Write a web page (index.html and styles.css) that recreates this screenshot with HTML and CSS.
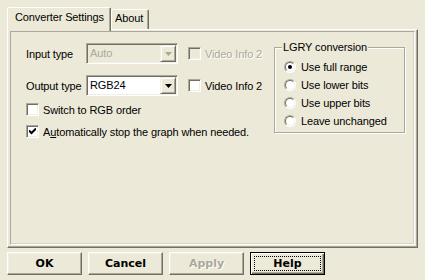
FILE: index.html
```html
<!DOCTYPE html>
<html>
<head>
<meta charset="utf-8">
<link rel="stylesheet" href="styles.css">
</head>
<body>
<div class="dialog">
  <div class="tabs">
    <div class="tab active">Converter Settings</div>
    <div class="tab">About</div>
  </div>
  <div class="panel">
    <div class="page">
      <div class="form">
        <div class="row">
          <span class="label">Input type</span>
          <div class="combo disabled">
            <span class="value">Auto</span>
            <span class="drop"><svg width="7" height="4" viewBox="0 0 7 4"><path d="M0 0H7L3.5 4Z"/></svg></span>
          </div>
          <div class="check disabled"><span class="box"></span><span class="text">Video Info 2</span></div>
        </div>
        <div class="row row2">
          <span class="label">Output type</span>
          <div class="combo">
            <span class="value">RGB24</span>
            <span class="drop"><svg width="7" height="4" viewBox="0 0 7 4"><path d="M0 0H7L3.5 4Z"/></svg></span>
          </div>
          <div class="check"><span class="box"></span><span class="text">Video Info 2</span></div>
        </div>
        <div class="check line3"><span class="box"></span><span class="text">Switch to RGB order</span></div>
        <div class="check line4"><span class="box"><svg width="7" height="7" viewBox="0 0 7 7"><path d="M0 2.5L2.5 5L7 0.5" fill="none" stroke="#000" stroke-width="2"/></svg></span><span class="text">A<u>u</u>tomatically stop the graph when needed.</span></div>
      </div>
      <fieldset class="group">
        <legend>LGRY conversion</legend>
        <div class="radio"><span class="circle on"></span><span class="text">Use full range</span></div>
        <div class="radio"><span class="circle"></span><span class="text">Use lower bits</span></div>
        <div class="radio"><span class="circle"></span><span class="text">Use upper bits</span></div>
        <div class="radio"><span class="circle"></span><span class="text">Leave unchanged</span></div>
      </fieldset>
    </div>
  </div>
  <div class="buttons">
    <div class="btn">OK</div>
    <div class="btn">Cancel</div>
    <div class="btn disabled">Apply</div>
    <div class="btn default"><span class="focus">Help</span></div>
  </div>
</div>
</body>
</html>
```
FILE: styles.css
```css
* { box-sizing: border-box; }
html, body { margin: 0; padding: 0; }
body {
  width: 425px;
  height: 280px;
  overflow: hidden;
  background: #ECE9D8;
  color: #000;
  font-family: "Liberation Sans", Arial, sans-serif;
  font-size: 11px;
  letter-spacing: -0.12px;
}
.dialog { padding: 7px 7px 0 7px; }

.tabs {
  display: flex;
  align-items: flex-end;
  height: 22px;
  position: relative;
  z-index: 1;
}
.tab {
  height: 20px;
  padding: 0 5px 0 3px;
  line-height: 17px;
  border: 1px solid;
  border-bottom: none;
  border-color: #fff #716F64 transparent #fff;
  border-radius: 2px 2px 0 0;
  box-shadow: inset -1px 0 #ACA899;
  background: #ECE9D8;
}
.tab.active {
  height: 24px;
  margin-bottom: -2px;
  padding: 0 6px 0 7px;
  line-height: 18px;
}

.panel {
  height: 219px;
  border: 1px solid;
  border-color: #fff #716F64 #716F64 #fff;
  box-shadow: inset -1px -1px #ACA899;
  padding: 1px 2px 2px 2px;
}
.page {
  height: 100%;
  border: 1px solid;
  border-color: #ACA899 #fff #fff #ACA899;
  box-shadow: inset -1px -1px #D6D2C2;
  display: flex;
  align-items: flex-start;
}

.form {
  width: 263px;
  padding: 11px 0 0 15px;
}
.row {
  display: flex;
  align-items: center;
  height: 21px;
}
.row2 { margin-top: 11px; }
.label { width: 60px; }
.combo {
  width: 92px;
  height: 21px;
  display: flex;
  align-items: stretch;
  padding: 1px;
  border: 1px solid;
  border-color: #ACA899 #fff #fff #ACA899;
  box-shadow: inset 1px 1px #716F64, inset -1px -1px #F1EFE2;
  background: #fff;
}
.combo .value {
  flex: 1;
  padding-left: 2px;
  line-height: 17px;
}
.combo .drop {
  width: 16px;
  display: flex;
  align-items: center;
  justify-content: center;
  border: 1px solid;
  border-color: #F1EFE2 #716F64 #716F64 #F1EFE2;
  box-shadow: inset 1px 1px #fff, inset -1px -1px #ACA899;
  background: #ECE9D8;
}
.combo .drop svg { fill: #000; }
.combo.disabled { background: #ECE9D8; }
.combo.disabled .value { color: #ACA899; }
.combo.disabled .drop svg { fill: #ACA899; }

.check {
  display: flex;
  align-items: center;
  gap: 4px;
}
.row .check { margin-left: 10px; }
.check .box {
  width: 13px;
  height: 13px;
  flex: none;
  display: flex;
  align-items: center;
  justify-content: center;
  border: 1px solid;
  border-color: #ACA899 #fff #fff #ACA899;
  box-shadow: inset 1px 1px #716F64, inset -1px -1px #F1EFE2;
  background: #fff;
}
.check.disabled .box { background: #ECE9D8; }
.check.disabled .text { color: #ACA899; text-shadow: 1px 1px #fff; }
.line3 { margin-top: 7px; height: 13px; }
.line4 { margin-top: 9px; height: 13px; }
.check .text u { text-decoration: underline; }

.group {
  margin: 9px 0 0 0;
  width: 131px;
  height: 92px;
  padding: 4px 0 0 9px;
  border: 1px solid #ACA899;
  box-shadow: inset 1px 1px #fff, 1px 1px #fff;
}
.group legend {
  padding: 0 1px;
  margin-left: -2px;
  line-height: 13px;
  background: #ECE9D8;
}
.radio {
  display: flex;
  align-items: center;
  height: 18px;
  gap: 5px;
}
.circle {
  width: 12px;
  height: 12px;
  flex: none;
  border-radius: 50%;
  border: 1px solid;
  border-color: #ACA899 #fff #fff #ACA899;
  background: #fff;
  display: flex;
  align-items: center;
  justify-content: center;
  position: relative;
}
.circle::before {
  content: "";
  width: 10px;
  height: 10px;
  border-radius: 50%;
  border: 1px solid;
  border-color: #716F64 #F1EFE2 #F1EFE2 #716F64;
  box-sizing: border-box;
}
.circle.on::after {
  content: "";
  position: absolute;
  width: 4px;
  height: 4px;
  border-radius: 50%;
  background: #000;
}

.buttons {
  display: flex;
  gap: 6px;
  margin-top: 4px;
}
.btn {
  width: 75px;
  height: 23px;
  display: flex;
  align-items: center;
  justify-content: center;
  border: 1px solid;
  border-color: #fff #716F64 #716F64 #fff;
  box-shadow: inset -1px -1px #ACA899, inset 1px 1px #F1EFE2;
  font-family: "DejaVu Sans", sans-serif;
  font-weight: bold;
  font-size: 11px;
  letter-spacing: 0;
}
.btn.disabled { color: #ACA899; text-shadow: 1px 1px #fff; }
.btn.default {
  border-color: #000;
  box-shadow: inset 1px 1px #fff, inset -1px -1px #716F64, inset -2px -2px #ACA899;
  padding: 3px;
}
.btn .focus {
  flex: 1;
  align-self: stretch;
  display: flex;
  align-items: center;
  justify-content: center;
  border: 1px dotted #000;
}
```
